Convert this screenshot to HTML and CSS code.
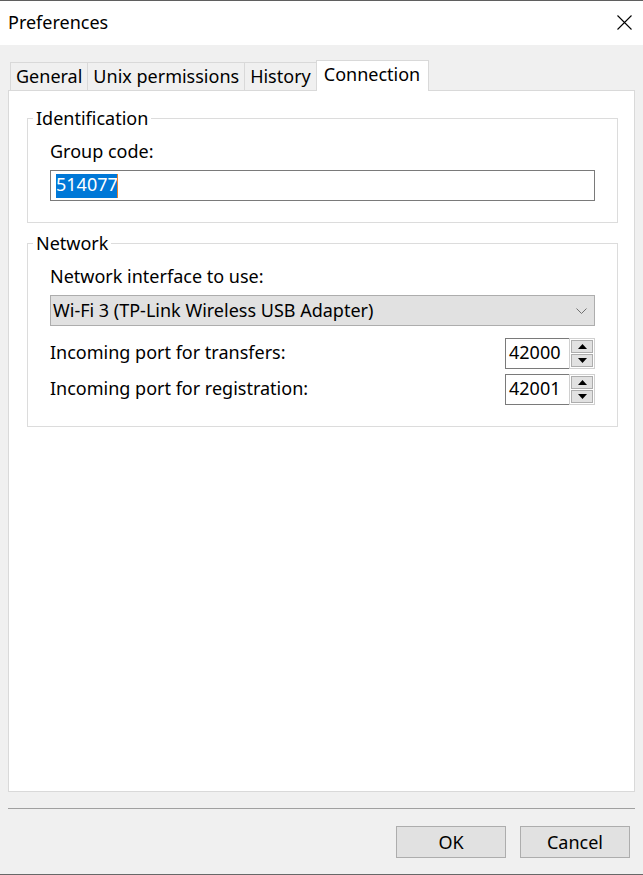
FILE: index.html
```html
<!DOCTYPE html>
<html lang="en">
<head>
<meta charset="utf-8">
<title>Preferences</title>
<link rel="stylesheet" href="styles.css">
</head>
<body>
<div class="window">
  <div class="titlebar">
    <span class="title">Preferences</span>
    <svg class="close" width="15" height="15" viewBox="0 0 15 15"><path d="M0.5 0.5 L14.5 14.5 M14.5 0.5 L0.5 14.5" stroke="#000" stroke-width="1.1" fill="none"/></svg>
  </div>
  <div class="tabs">
    <div class="tab">General</div>
    <div class="tab">Unix permissions</div>
    <div class="tab">History</div>
    <div class="tab active">Connection</div>
  </div>
  <div class="panel">
    <fieldset class="group">
      <legend>Identification</legend>
      <div class="group-body">
        <div class="label">Group code:</div>
        <div class="textbox"><span class="sel">514077</span><span class="caret"></span></div>
      </div>
    </fieldset>
    <fieldset class="group group-net">
      <legend>Network</legend>
      <div class="group-body">
        <div class="label">Network interface to use:</div>
        <div class="combo">
          <span class="combo-text">Wi-Fi 3 (TP-Link Wireless USB Adapter)</span>
          <svg class="chevron" width="11" height="6" viewBox="0 0 11 6"><polyline points="0.5,0.5 5.5,5.5 10.5,0.5" fill="none" stroke="#707070" stroke-width="1"/></svg>
        </div>
        <div class="row">
          <span class="label">Incoming port for transfers:</span>
          <div class="spin">
            <div class="spin-val">42000</div>
            <div class="spin-btns">
              <div class="spin-btn"><svg width="9" height="5" viewBox="0 0 9 5"><polygon points="0,5 4.5,0 9,5" fill="#000"/></svg></div>
              <div class="spin-btn"><svg width="9" height="5" viewBox="0 0 9 5"><polygon points="0,0 9,0 4.5,5" fill="#000"/></svg></div>
            </div>
          </div>
        </div>
        <div class="row">
          <span class="label">Incoming port for registration:</span>
          <div class="spin">
            <div class="spin-val">42001</div>
            <div class="spin-btns">
              <div class="spin-btn"><svg width="9" height="5" viewBox="0 0 9 5"><polygon points="0,5 4.5,0 9,5" fill="#000"/></svg></div>
              <div class="spin-btn"><svg width="9" height="5" viewBox="0 0 9 5"><polygon points="0,0 9,0 4.5,5" fill="#000"/></svg></div>
            </div>
          </div>
        </div>
      </div>
    </fieldset>
  </div>
  <div class="sep"></div>
  <div class="buttons">
    <div class="btn">OK</div>
    <div class="btn">Cancel</div>
  </div>
</div>
</body>
</html>
```
FILE: styles.css
```css
html, body {
  margin: 0;
  padding: 0;
}
body {
  width: 643px;
  height: 875px;
  background: #f0f0f0;
  font-family: "Noto Sans", "Open Sans", sans-serif;
  font-size: 18px;
  color: #000;
  overflow: hidden;
}
.window {
  height: 875px;
  box-sizing: border-box;
  border-top: 1px solid #5f5f5f;
  border-bottom: 1px solid #686868;
  display: flex;
  flex-direction: column;
}
.titlebar {
  flex: none;
  height: 44px;
  background: #fff;
  display: flex;
  align-items: center;
  justify-content: space-between;
  padding: 0 11px 0 8px;
}
.title {
  line-height: 24px;
  padding-bottom: 2px;
}
.close {
  display: block;
  margin-bottom: 1px;
}
.tabs {
  flex: none;
  display: flex;
  align-items: flex-end;
  height: 30px;
  margin: 15px 0 0 10px;
  position: relative;
  z-index: 1;
}
.tab {
  box-sizing: border-box;
  height: 28px;
  border: 1px solid #d9d9d9;
  border-bottom: none;
  padding: 1px 5px 0 5px;
  line-height: 24px;
  margin-left: -1px;
  background: #f0f0f0;
  white-space: nowrap;
}
.tab:first-child {
  margin-left: 0;
}
.tab.active {
  height: 31px;
  margin-bottom: -1px;
  background: #fff;
  padding: 1px 8px 0 7px;
}
.panel {
  flex: 1;
  margin: 0 8px;
  background: #fff;
  border: 1px solid #d9d9d9;
  padding: 15px 16px 0 18px;
}
.group {
  margin: 0;
  padding: 0;
  border: 1px solid #dcdcdc;
  min-width: 0;
}
.group legend {
  padding: 0 3px;
  margin-left: 5px;
  line-height: 25px;
}
.group-net {
  margin-top: 8px;
}
.group-body {
  padding: 8px 22px 21px;
}
.label {
  line-height: 24px;
  white-space: nowrap;
}
.row .label {
  padding-bottom: 4px;
}
.textbox {
  margin-top: 7px;
  height: 31px;
  box-sizing: border-box;
  border: 1px solid #7a7a7a;
  background: #fff;
  display: flex;
  align-items: center;
  padding-left: 5px;
}
.sel {
  display: inline-block;
  height: 24px;
  line-height: 20px;
  background: #0078d7;
  color: #fff;
}
.caret {
  display: inline-block;
  width: 1px;
  height: 24px;
  margin-left: -1px;
  background: #e8822c;
}
.combo {
  margin-top: 7px;
  height: 31px;
  box-sizing: border-box;
  border: 1px solid #adadad;
  background: #e1e1e1;
  display: flex;
  align-items: center;
  justify-content: space-between;
  padding: 0 7px 0 2px;
  line-height: 24px;
}
.combo-text {
  padding-bottom: 1px;
}
.chevron {
  display: block;
}
.row {
  display: flex;
  align-items: center;
  justify-content: space-between;
  margin-top: 12px;
}
.row + .row {
  margin-top: 5px;
}
.spin {
  display: flex;
  height: 31px;
}
.spin-val {
  width: 64px;
  box-sizing: border-box;
  border: 1px solid #7a7a7a;
  border-right: none;
  padding: 0 0 3px 3px;
  display: flex;
  align-items: center;
  background: #fff;
  line-height: 24px;
}
.spin-btns {
  width: 26px;
  box-sizing: border-box;
  border: 1px solid #d0d0d0;
  padding: 1px;
  display: flex;
  flex-direction: column;
  gap: 1px;
  background: #fff;
}
.spin-btn {
  flex: 1;
  border: 1px solid #adadad;
  background: #e1e1e1;
  display: flex;
  align-items: center;
  justify-content: center;
}
.spin-btn svg {
  display: block;
}
.sep {
  flex: none;
  height: 1px;
  margin: 16px 8px 0;
  background: #a0a0a0;
}
.buttons {
  flex: none;
  display: flex;
  justify-content: flex-end;
  gap: 14px;
  margin: 17px 13px 16px 0;
}
.btn {
  width: 110px;
  height: 32px;
  box-sizing: border-box;
  border: 1px solid #adadad;
  background: #e1e1e1;
  display: flex;
  align-items: center;
  justify-content: center;
  line-height: 24px;
}
```
